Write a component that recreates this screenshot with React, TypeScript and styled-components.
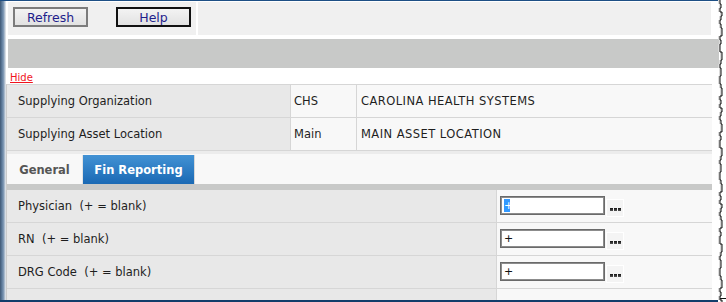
import React from 'react';
import styled, { createGlobalStyle } from 'styled-components';

const GlobalStyle = createGlobalStyle`
  html, body { margin: 0; padding: 0; background: #fff; }
  body { font-family: "DejaVu Sans", Verdana, sans-serif; font-size: 11.5px; color: #1e1e1e; }
  * { box-sizing: border-box; }
`;

const Screen = styled.div`
  width: 726px;
  height: 302px;
  overflow: hidden;
  display: flex;
  background: #fff;
`;

const Window = styled.div`
  width: 712px;
  flex: none;
  display: flex;
  flex-direction: column;
`;

const TopRule = styled.div`
  height: 1px;
  background: #1d4f85;
  margin-right: -8px;
`;

const BottomRule = styled.div`
  height: 2px;
  background: #123d6b;
  margin-right: -6px;
`;

const WindowBody = styled.div`
  flex: 1;
  display: flex;
  min-height: 0;
`;

const FrameStrip = styled.div`
  width: 6px;
  flex: none;
  background: linear-gradient(to right, #3f5874 0px, #5f7c9c 2px, #8aa2bc 4px, #c9d2dc 5px, #e6e9ec 6px);
`;

const Main = styled.div`
  flex: 1;
  display: flex;
  flex-direction: column;
  min-width: 0;
`;

const Toolbar = styled.div`
  display: flex;
  gap: 2px;
  height: 33px;
  margin: 1px 1px 0 2px;
`;

const ToolCell = styled.div<{ $w?: number }>`
  background: #f0f0f0;
  display: flex;
  align-items: flex-start;
  gap: 28px;
  padding: 5px 0 0 5px;
  ${(p) => (p.$w ? `width: ${p.$w}px; flex: none;` : 'flex: 1;')}
`;

const ToolButton = styled.button<{ $default?: boolean }>`
  width: 75px;
  height: 20px;
  padding: 0;
  font-family: "DejaVu Sans", Verdana, sans-serif;
  font-size: 12.5px;
  color: #1e1e8c;
  background: linear-gradient(to bottom, #f3f3f3, #e2e2e2);
  border: 2px solid ${(p) => (p.$default ? '#111' : '#7c7c7c')};
  border-radius: 0;
  line-height: 15px;
`;

const Band = styled.div`
  height: 29px;
  margin: 4px -7px 0 2px;
  background: #c8c9c8;
`;

const HideRow = styled.div`
  height: 16px;
  padding: 5px 0 0 4px;
`;

const HideLink = styled.a`
  font-size: 10px;
  line-height: 10px;
  color: #f0141e;
  text-decoration: underline;
  display: block;
`;

const Panel = styled.div`
  flex: 1;
  display: flex;
  flex-direction: column;
  border-left: 1px solid #cbcbcb;
  border-top: 1px solid #d6d6d6;
`;

const InfoRow = styled.div`
  display: grid;
  grid-template-columns: 284px 66px 1fr;
  height: 33px;
  border-bottom: 1px solid #d6d6d6;
`;

const Cell = styled.div<{ $label?: boolean; $pad?: number; $caps?: boolean }>`
  display: flex;
  align-items: center;
  padding-left: ${(p) => p.$pad ?? 11}px;
  background: ${(p) => (p.$label ? '#e8e8e8' : '#f8f8f8')};
  border-right: 1px solid #d6d6d6;
  white-space: pre;
  letter-spacing: ${(p) => (p.$caps ? '0.45px' : '0')};
  &:last-child { border-right: none; }
`;

const InfoGap = styled.div`
  height: 3px;
  background: #ececec;
`;

const TabBar = styled.div`
  height: 30px;
  padding-top: 1px;
  display: flex;
  background: #f8f8f8;
`;

const Tab = styled.div<{ $active?: boolean; $w: number }>`
  width: ${(p) => p.$w}px;
  display: flex;
  align-items: center;
  justify-content: center;
  font-weight: bold;
  font-size: 11.5px;
  color: ${(p) => (p.$active ? '#fff' : '#555')};
  background: ${(p) => (p.$active ? 'linear-gradient(to bottom, #4292d4, #1a69b4)' : '#f8f8f8')};
  border-right: 1px solid ${(p) => (p.$active ? '#d8d8d8' : '#e4e4e4')};
`;

const TabUnderline = styled.div`
  height: 6px;
  background: #c8c9c8;
`;

const FormRow = styled.div<{ $partial?: boolean }>`
  display: grid;
  grid-template-columns: 490px 1fr;
  height: ${(p) => (p.$partial ? 'auto' : '33px')};
  flex: ${(p) => (p.$partial ? '1' : 'none')};
  border-bottom: ${(p) => (p.$partial ? 'none' : '1px solid #d6d6d6')};
`;

const FieldCell = styled.div`
  background: #f8f8f8;
  display: flex;
  align-items: flex-start;
  padding: 6px 0 0 3px;
`;

const TextBox = styled.div`
  width: 105px;
  height: 19px;
  border: 1px solid #6a6a6a;
  box-shadow: inset 0 0 0 1px #8c8c8c;
  background: #fff;
  padding: 3px 0 0 3px;
  font-size: 11px;
  line-height: 12px;
  color: #111;
`;

const Selected = styled.span`
  background: #3399ff;
  color: #fff;
  display: inline-block;
  width: 6px;
  height: 13px;
  line-height: 13px;
  text-align: center;
  margin-top: -1px;
`;

const DotsButton = styled.div`
  width: 18px;
  height: 18px;
  margin: 3px 0 0 1px;
  border: 1px solid #fff;
  background: #f4f4f4;
  display: flex;
  align-items: center;
  justify-content: center;
  gap: 1px;
  padding-top: 2px;
`;

const Dot = styled.span`
  width: 3px;
  height: 3px;
  background: linear-gradient(to bottom, #111, #555);
`;

const TornEdge = () => {
  const pattern = [3, 4, 3, 5, 4, 3, 4, 5, 5, 3, 4, 3, 3, 5, 5, 4, 3, 4, 4, 3, 3, 4, 5, 5];
  const pts: string[] = [];
  let i = 0;
  for (let y = 0; y <= 302; y += 4) {
    const x = 5 + pattern[i % pattern.length];
    pts.push(`${x},${y}`);
    pts.push(`${x},${y + 4}`);
    i++;
  }
  const line = pts.join(' ');
  const shade = pts
    .map((p) => {
      const [x, y] = p.split(',').map(Number);
      return `${x - 2},${y}`;
    })
    .join(' ');
  return (
    <svg width="14" height="302" viewBox="0 0 14 302" style={{ flex: 'none', display: 'block' }}>
      <polygon points={`${line} 14,306 14,0`} fill="#fff" />
      <polygon points={`${shade} ${pts.slice().reverse().join(' ')}`} fill="#dadada" />
      <polyline points={line} fill="none" stroke="#111" strokeWidth="1" />
      <line x1="8" y1="298.5" x2="14" y2="298.5" stroke="#111" strokeWidth="1" />
    </svg>
  );
};

const info = [
  { label: 'Supplying Organization', code: 'CHS', name: 'CAROLINA HEALTH SYSTEMS' },
  { label: 'Supplying Asset Location', code: 'Main', name: 'MAIN ASSET LOCATION' },
];

const fields = ['Physician  (+ = blank)', 'RN  (+ = blank)', 'DRG Code  (+ = blank)'];

export default function App() {
  return (
    <>
      <GlobalStyle />
      <Screen>
        <Window>
          <TopRule />
          <WindowBody>
            <FrameStrip />
            <Main>
              <Toolbar>
                <ToolCell $w={188}>
                  <ToolButton>Refresh</ToolButton>
                  <ToolButton $default>Help</ToolButton>
                </ToolCell>
                <ToolCell />
              </Toolbar>
              <Band />
              <HideRow>
                <HideLink href="#">Hide</HideLink>
              </HideRow>
              <Panel>
                {info.map((r) => (
                  <InfoRow key={r.label}>
                    <Cell $label>{r.label}</Cell>
                    <Cell $pad={3}>{r.code}</Cell>
                    <Cell $pad={4} $caps>
                      {r.name}
                    </Cell>
                  </InfoRow>
                ))}
                <InfoGap />
                <TabBar>
                  <Tab $w={76}>General</Tab>
                  <Tab $w={112} $active>
                    Fin Reporting
                  </Tab>
                </TabBar>
                <TabUnderline />
                {fields.map((f, idx) => (
                  <FormRow key={f}>
                    <Cell $label>{f}</Cell>
                    <FieldCell>
                      <TextBox>{idx === 0 ? <Selected>+</Selected> : '+'}</TextBox>
                      <DotsButton>
                        <Dot />
                        <Dot />
                        <Dot />
                      </DotsButton>
                    </FieldCell>
                  </FormRow>
                ))}
                <FormRow $partial>
                  <Cell $label />
                  <FieldCell />
                </FormRow>
              </Panel>
            </Main>
          </WindowBody>
          <BottomRule />
        </Window>
        <TornEdge />
      </Screen>
    </>
  );
}
